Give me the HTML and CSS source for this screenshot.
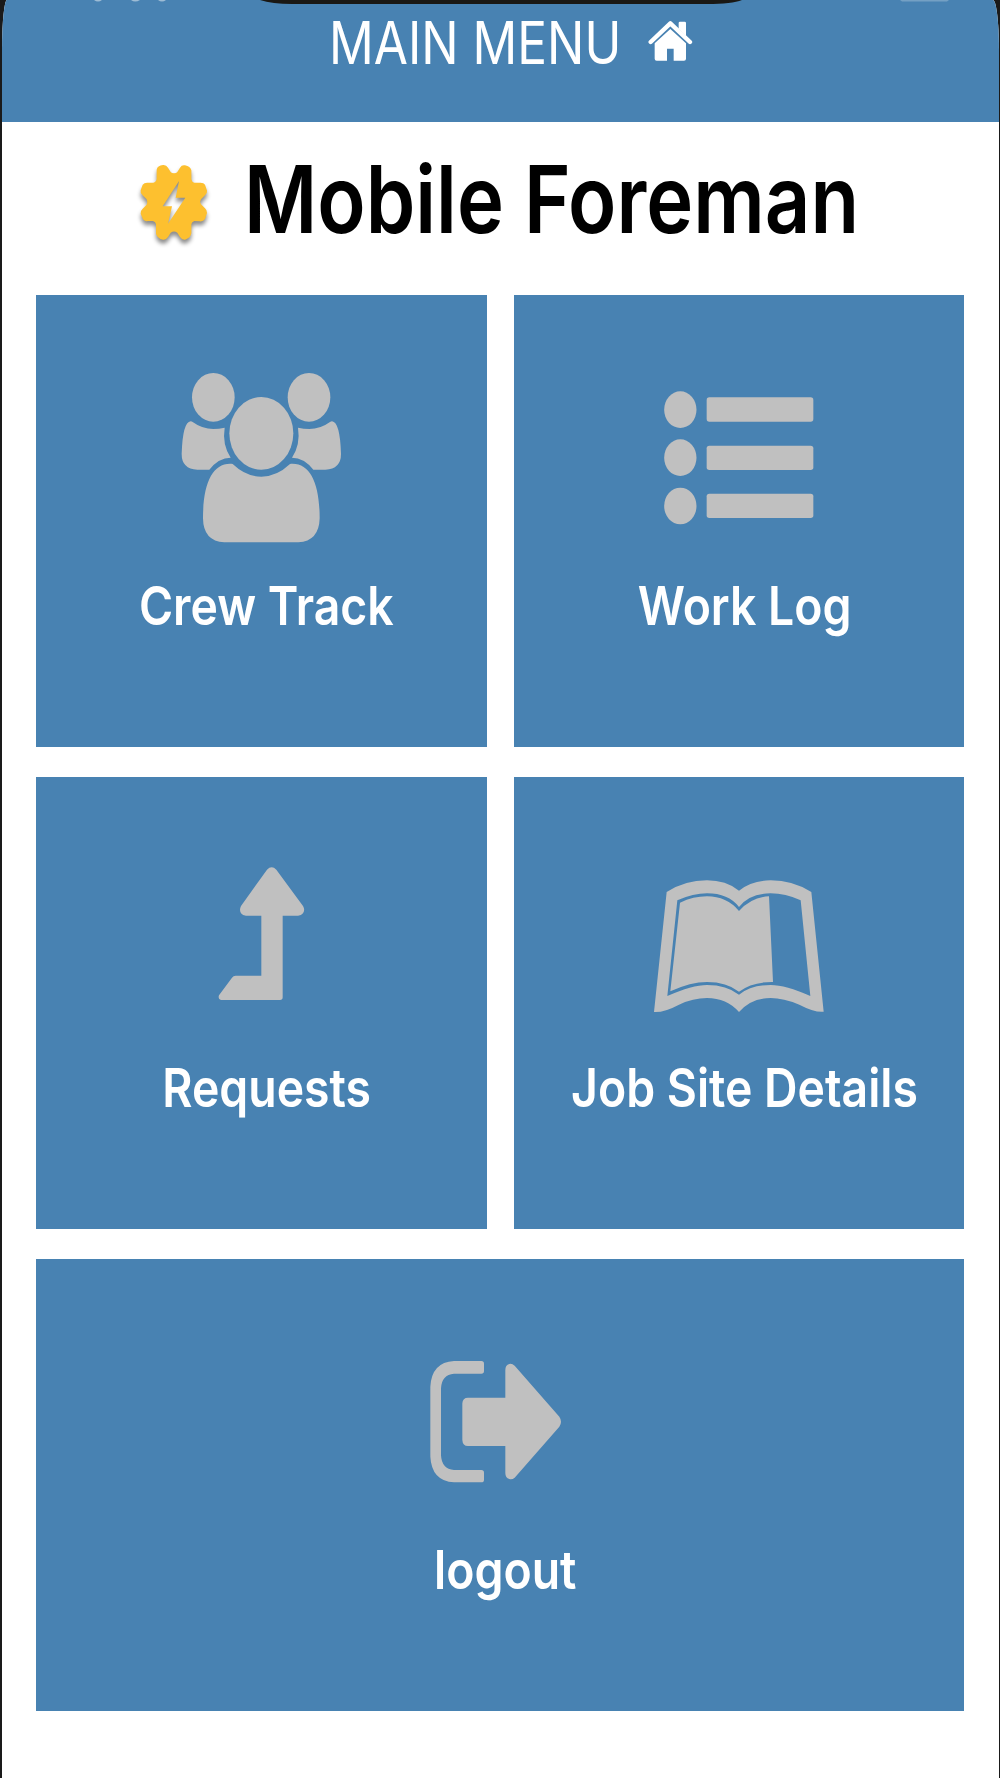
FILE: index.html
```html
<!DOCTYPE html>
<html lang="en">
<head>
<meta charset="UTF-8" />
<meta name="viewport" content="width=device-width, initial-scale=1" />
<title>Mobile Foreman</title>
<link rel="stylesheet" href="styles.css">
</head>
<body>
<div class="screen">
  <header class="topbar">
    <!-- bottom edge of the phone status bar -->
    <svg class="status" viewBox="0 0 997 8">
      <path fill="#1a1814" d="M258 0Q270 4 290 4H705Q730 4 740 0Z" />
      <g fill="#9dbcd5">
        <path d="M92 0H100Q96 3 92 0ZM129 0H138Q133 3 129 0ZM156 0H164Q160 3 156 0Z" />
        <path fill="#74a0c4" d="M898 0H947L945 1.5H900Z" />
      </g>
    </svg>
    <span class="menu-title">MAIN MENU</span>
    <svg class="home" viewBox="445 60 135 125">
      <path fill="none" stroke="#fff" stroke-width="13" stroke-linecap="round" stroke-linejoin="round" d="M453 126L512 70L571 126" />
      <path fill="#fff" d="M537 69Q537 65 541 65H555Q559 65 559 69V108L537 86ZM465 130L512 87L559 130V176Q559 182 553 182H522V146H502V182H471Q465 182 465 176Z" />
    </svg>
  </header>

  <div class="brand">
    <svg class="gear" viewBox="55 65 215 245">
      <path fill="#fdc02f" fill-rule="evenodd" d="M111 88Q113 76 130 74Q140 73 145 82L153 95Q156 99 163 99Q170 99 173 95L181 82Q186 73 196 75Q212 78 215 90V117Q217 126 224 127H240Q252 126 256 133L262 151Q263 160 256 165L244 177Q239 184 244 192L256 204Q263 210 262 218L256 236Q251 244 240 243L224 242Q216 244 215 252V279Q213 293 196 298Q187 299 181 290L173 277Q163 270 153 277L145 290Q139 299 130 298Q113 294 109 280V252Q108 244 100 242H85Q74 244 70 237L63 220Q62 211 69 205L81 193Q85 186 81 177L69 165Q61 158 63 150L69 133Q74 126 85 127H101Q109 126 111 116ZM178 122L129 198H157L145 250L197 172H168Z" />
    </svg>
    <h1>Mobile Foreman</h1>
  </div>

  <main class="menu">
    <a class="tile">
      <svg class="icon" viewBox="153 45 543 540">
        <ellipse cx="280" cy="142" rx="64" ry="73" />
        <ellipse cx="567" cy="142" rx="64" ry="73" />
        <ellipse cx="424" cy="250" rx="96" ry="109" />
        <path d="M218 216Q247 237 280 237Q297 237 314 233Q306 283 332 323Q296 323 268 359H232Q185 357 185 312Q188 216 212 214Q215 214 218 216Z" />
        <path d="M630 216Q601 237 568 237Q551 237 534 233Q542 283 516 323Q552 323 580 359H616Q663 357 663 312Q660 216 636 214Q633 214 630 216Z" />
        <path d="M338 342Q378 380 424 380Q470 380 510 342C570 336 599 400 599 505Q597 574 535 577H313Q250 574 249 505C249 400 278 336 338 342Z" />
      </svg>
      <span class="label">Crew Track</span>
    </a>
    <a class="tile">
      <svg class="icon" viewBox="147 45 543 540">
        <ellipse cx="241" cy="179" rx="48.500" ry="55" />
        <ellipse cx="241" cy="323" rx="48.500" ry="55" />
        <ellipse cx="241" cy="468" rx="48.500" ry="55" />
        <rect x="320" y="142" width="320" height="73" rx="8" />
        <rect x="320" y="287" width="320" height="73" rx="8" />
        <rect x="320" y="431" width="320" height="73" rx="8" />
      </svg>
      <span class="label">Work Log</span>
    </a>
    <a class="tile">
      <svg class="icon" viewBox="93 21 543 540">
        <path d="M381 89Q395 75 409 89L489 198Q496 210 489 220Q484 227 474 227H428V472Q428 480 420 480H243Q233 478 237 466L276 413Q280 407 287 407H364V227H318Q308 227 303 220Q297 210 303 198Z" />
      </svg>
      <span class="label">Requests</span>
    </a>
    <a class="tile">
      <svg class="icon" viewBox="267 21 543 540">
        <path fill-rule="evenodd" d="M320 156Q375 121 441 121Q498 121 537 152Q575 121 632 121Q698 121 754 156L791 515Q764 518 718 494Q670 474 632 474Q573 474 537 516Q500 474 441 474Q399 474 357 494Q312 518 282 516ZM352 181Q400 160 441 160Q505 160 537 201Q568 160 632 160Q676 160 722 181L751 468Q677 435 632 435Q573 435 537 464Q500 435 441 435Q397 435 322 468Z" />
        <path d="M360 188Q400 169 441 169Q500 169 537 213Q575 171 627 169L639 426Q577 425 537 455Q500 426 441 426Q392 426 331 454Z" />
      </svg>
      <span class="label">Job Site Details</span>
    </a>
    <a class="tile wide">
      <svg class="icon" viewBox="30 -3 543 540">
        <path d="M162 93H244Q252 93 252 101V123Q252 131 244 131H162Q125 134 123 175V376Q125 417 162 420H244Q252 420 252 428V449Q252 457 244 457H162Q95 453 91 380V170Q95 97 162 93Z" />
        <path d="M316 120Q316 105 328 102Q336 100 344 107L478 260Q488 275 478 290L344 443Q336 450 328 447Q316 444 316 430V348H204Q188 348 187 330V220Q188 203 204 203H316Z" />
      </svg>
      <span class="label">logout</span>
    </a>
  </main>
</div>
</body>
</html>
```

FILE: styles.css
```css
* { box-sizing: border-box; }
body {
  margin: 0;
  background: #1a1a1a;
  font-family: Inter, Roboto, sans-serif;
}
.screen {
  height: 1778px;
  margin: 0 1px 0 1.5px;
  background: white;
  border-radius: 5px 6px 0 0 / 50px 50px 0 0;
  overflow: hidden;
}
.topbar {
  position: relative;
  display: flex;
  height: 122px;
  padding: 6px 0 0 327px;
  background: #4882b2;
  color: white;
}
.status {
  position: absolute;
  top: 0;
  left: 0;
  width: 997px;
  height: 8px;
}
.menu-title {
  width: 319px;
  font-size: 59px;
  font-weight: 400;
  line-height: 73px;
  white-space: nowrap;
  transform: scaleX(0.84);
  transform-origin: left;
}
.home {
  width: 45px;
  height: 41.7px;
  margin-top: 14px;
}
.brand {
  display: flex;
  height: 173px;
  padding: 40px 0 0 136px;
}
.gear {
  width: 71.7px;
  height: 81.7px;
  filter: drop-shadow(0 4px 2px rgba(0, 0, 0, 0.45));
}
h1 {
  margin: -19px 0 0 35px;
  font-size: 93.5px;
  font-weight: 600;
  line-height: 112px;
  white-space: nowrap;
  transform: scaleX(0.85);
  transform-origin: left;
}

/* tiles */
.menu {
  display: grid;
  grid-template-columns: 451px 450px;
  grid-auto-rows: 451.5px;
  gap: 30.5px 27px;
  padding-left: 34.5px;
}
.tile {
  display: flex;
  flex-direction: column;
  align-items: center;
  padding-top: 70px;
  background: #4882b2;
  color: white;
}
.wide { grid-column: span 2; }
.icon {
  width: 181px;
  height: 180px;
  fill: #c0c0c0;
}
.label {
  margin: 28.5px 0 0 10.5px;
  font-size: 53.6px;
  font-weight: 600;
  line-height: 64px;
  white-space: nowrap;
  transform: scaleX(0.865);
}
```
